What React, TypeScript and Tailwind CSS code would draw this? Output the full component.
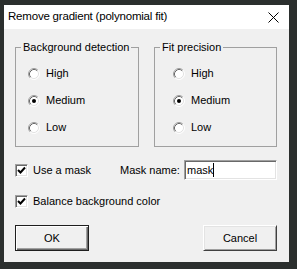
import React from 'react';

const font = { fontFamily: '"Liberation Sans", Arial, sans-serif' };

const Radio: React.FC<{ checked?: boolean }> = ({ checked }) => (
  <svg width="12" height="12" viewBox="0 0 12 12" className="shrink-0">
    <circle cx="6" cy="6" r="5" fill="#ffffff" />
    <path d="M2.11 9.89 A5.5 5.5 0 0 1 9.89 2.11" fill="none" stroke="#a0a0a0" strokeWidth="1" />
    <path d="M9.89 2.11 A5.5 5.5 0 0 1 2.11 9.89" fill="none" stroke="#ffffff" strokeWidth="1" />
    <path d="M2.82 9.18 A4.5 4.5 0 0 1 9.18 2.82" fill="none" stroke="#696969" strokeWidth="1" />
    <path d="M9.18 2.82 A4.5 4.5 0 0 1 2.82 9.18" fill="none" stroke="#e3e3e3" strokeWidth="1" />
    {checked && <circle cx="6" cy="6" r="2" fill="#000000" />}
  </svg>
);

const Checkbox: React.FC<{ checked?: boolean }> = ({ checked }) => (
  <span className="w-[13px] h-[13px] shrink-0 bg-white border border-t-[#a0a0a0] border-l-[#a0a0a0] border-r-white border-b-white shadow-[inset_1px_1px_#696969,inset_-1px_-1px_#e3e3e3] flex items-center justify-center">
    {checked && (
      <svg width="9" height="9" viewBox="0 0 9 9">
        <path d="M1 4 L3.5 6.5 L8 1.5" fill="none" stroke="#000" strokeWidth="2" />
      </svg>
    )}
  </span>
);

const RadioRow: React.FC<{ label: string; checked?: boolean }> = ({ label, checked }) => (
  <div className="h-[27px] flex items-center gap-[6px]">
    <Radio checked={checked} />
    <span>{label}</span>
  </div>
);

const Group: React.FC<{ title: string; width: string; inset: string }> = ({ title, width, inset }) => (
  <fieldset className={`${width} h-[106px] border border-[#a0a0a0] m-0 p-0`}>
    <legend className="ml-[5px] px-[2px] leading-[13px]">{title}</legend>
    <div className={`${inset} pt-[6px] flex flex-col`}>
      <RadioRow label="High" />
      <RadioRow label="Medium" checked />
      <RadioRow label="Low" />
    </div>
  </fieldset>
);

export default function App() {
  return (
    <div className="w-[297px] h-[269px] bg-[#2b2f2e] pt-[5px] pl-[4px] overflow-hidden">
      <div className="w-[285px] h-[257px] flex flex-col bg-[#f0f0f0] text-[11px] text-black" style={font}>
        {/* title bar */}
        <div className="h-[24px] shrink-0 bg-white flex items-center justify-between pl-[4px] pr-[10px]">
          <span className="text-[11.5px] tracking-[-0.2px]">Remove gradient (polynomial fit)</span>
          <svg width="11" height="11" viewBox="0 0 11 11">
            <path d="M0.5 0.5 L10.5 10.5 M10.5 0.5 L0.5 10.5" stroke="#000" strokeWidth="1" />
          </svg>
        </div>

        <div className="flex-1 pl-[11px] pr-[12px] pt-[12px] flex flex-col">
          <div className="flex gap-[15px]">
            <Group title="Background detection" width="w-[124px]" inset="pl-[12px]" />
            <Group title="Fit precision" width="w-[123px]" inset="pl-[18px]" />
          </div>

          <div className="mt-[13px] h-[20px] flex items-center">
            <div className="w-[105px] flex items-center gap-[5px]">
              <Checkbox checked />
              <span>Use a mask</span>
            </div>
            <span>Mask name:</span>
            <div className="ml-auto w-[93px] h-[20px] bg-white border border-t-[#a0a0a0] border-l-[#a0a0a0] border-r-white border-b-white shadow-[inset_1px_1px_#696969,inset_-1px_-1px_#e3e3e3] flex items-center pl-[2px]">
              <span>mask</span>
              <span className="w-[1px] h-[14px] bg-black" />
            </div>
          </div>

          <div className="mt-[11px] h-[20px] flex items-center gap-[5px]">
            <Checkbox checked />
            <span>Balance background color</span>
          </div>

          <div className="mt-[14px] flex gap-[114px]">
            <button className="w-[75px] h-[26px] bg-[#f0f0f0] border border-[#1e1e1e] shadow-[inset_1px_1px_#ffffff,inset_-1px_-1px_#696969,inset_-2px_-2px_#a0a0a0]">
              OK
            </button>
            <button className="w-[75px] h-[26px] bg-[#f0f0f0] border border-t-white border-l-white border-r-[#404040] border-b-[#404040] shadow-[inset_1px_1px_#e3e3e3,inset_-1px_-1px_#a0a0a0]">
              Cancel
            </button>
          </div>
        </div>
      </div>
    </div>
  );
}
